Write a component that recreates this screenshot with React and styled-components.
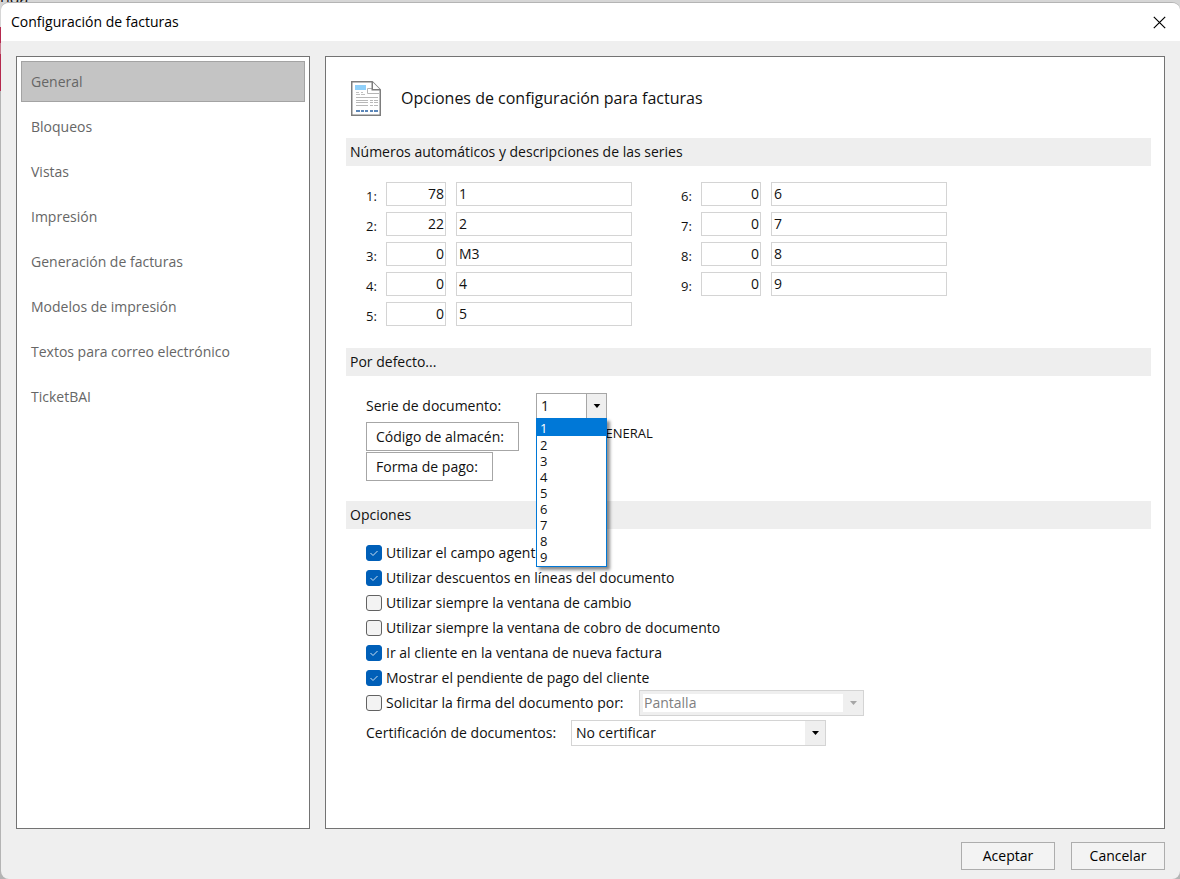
import React, { useState } from 'react';
import styled, { createGlobalStyle } from 'styled-components';

const GlobalStyle = createGlobalStyle`
  * {
    box-sizing: border-box;
  }

  body {
    margin: 0;
    background: #d6d6d6;
    font-family: 'Open Sans', 'Noto Sans', sans-serif;
    font-size: 14px;
    line-height: 20px;
    color: #111;
  }

  button,
  input,
  select {
    font: inherit;
    color: inherit;
  }
`;

const Desktop = styled.div`
  display: flex;
  flex-direction: column;
  min-height: 100vh;
  background: linear-gradient(
    #d6d6d6 27px,
    #b5294e 27px,
    #b5294e 43px,
    #c9788c 43px,
    #c9788c 54px,
    #b5294e 54px,
    #b5294e 91px,
    #b4b4b4 91px
  );
`;

const BehindStrip = styled.div`
  height: 2px;
  overflow: hidden;
  display: flex;
  align-items: flex-end;
  font-size: 16px;
  line-height: 8px;
`;

const Window = styled.div`
  flex: 1;
  display: flex;
  flex-direction: column;
  margin-left: 1px;
  background: #efefef;
  border-top: 1px solid #b4b4b4;
  border-radius: 8px;
  overflow: hidden;
`;

const TitleBar = styled.header`
  display: flex;
  align-items: center;
  justify-content: space-between;
  height: 38px;
  padding: 0 14px 0 10px;
  background: #fff;
  color: #000;

  h1 {
    margin: 0;
    font-size: 14px;
    font-weight: 400;
  }
`;

const CloseButton = styled.button`
  display: flex;
  padding: 0;
  border: 0;
  background: none;
`;

const Body = styled.div`
  flex: 1;
  display: flex;
  gap: 15px;
  padding: 15px 15px 0;
`;

const Sidebar = styled.nav`
  flex: 0 0 294px;
  display: flex;
  flex-direction: column;
  gap: 4px;
  padding: 4px;
  background: #fff;
  border: 1px solid #737373;
`;

const SideLink = styled.a`
  display: flex;
  align-items: center;
  height: 41px;
  padding: 0 9px;
  color: #666;
  text-decoration: none;
  background: ${(props) => (props.$active ? '#c4c4c4' : 'transparent')};
  border: 1px solid ${(props) => (props.$active ? '#a3a3a3' : 'transparent')};
`;

const Content = styled.main`
  flex: 1;
  min-width: 0;
  padding: 20px 13px 20px 20px;
  background: #fff;
  border: 1px solid #737373;
`;

const PageHeader = styled.div`
  display: flex;
  align-items: center;
  gap: 20px;
  height: 42px;
  padding-left: 5px;
  margin-bottom: 19px;

  h2 {
    margin: 0;
    font-size: 16px;
    font-weight: 400;
  }
`;

const SectionTitle = styled.h3`
  margin: 0;
  padding: 4px;
  background: #eee;
  font-size: 14px;
  font-weight: 400;
`;

const SeriesGrid = styled.div`
  display: grid;
  grid-template-columns: 266px 266px;
  grid-template-rows: repeat(5, 24px);
  grid-auto-flow: column;
  column-gap: 49px;
  row-gap: 6px;
  padding: 16px 20px 22px;
`;

const SeriesRow = styled.div`
  display: grid;
  grid-template-columns: 10px 60px 176px;
  gap: 10px;

  label {
    padding-top: 4px;
    font-size: 13px;
    white-space: nowrap;
  }
`;

const Field = styled.input`
  min-width: 0;
  height: 24px;
  padding: 0 1px 2px 2px;
  border: 1px solid #d4d4d4;
  background: #fff;
  text-align: ${(props) => props.$align || 'left'};
  outline: 0;
`;

const Defaults = styled.div`
  display: grid;
  grid-template-columns: 170px 1fr;
  grid-auto-rows: 30px;
  align-items: center;
  padding: 15px 20px 20px;
`;

const LinkButton = styled.button`
  justify-self: start;
  align-self: end;
  height: 29px;
  padding: 0 14px 0 9px;
  border: 1px solid #a6a6a6;
  background: #fff;
`;

const Warehouse = styled.span`
  padding: 0 0 6px 60px;
  font-size: 13px;
`;

const Combo = styled.div`
  position: relative;
  display: grid;
  width: ${(props) => props.$width}px;
  height: 26px;

  > select,
  > svg {
    grid-area: 1 / 1;
  }

  > svg {
    justify-self: end;
    width: 20px;
    height: 24px;
    margin: 1px;
    background: #efefef;
    border-left: ${(props) => (props.$open ? '1px solid #a6a6a6' : '0')};
    color: ${(props) => (props.$disabled ? '#a6a6a6' : '#000')};
    pointer-events: none;
  }
`;

const Select = styled.select`
  appearance: none;
  width: 100%;
  height: 26px;
  padding: 0 24px 0 4px;
  border: 1px solid ${(props) => (props.$open ? '#a6a6a6' : '#d4d4d4')};
  border-radius: 0;
  background: #fff;
  outline: 0;

  &:disabled {
    color: #808080;
    opacity: 1;
    box-shadow: inset 0 0 0 3px #efefef;
  }
`;

const List = styled.ul`
  position: absolute;
  top: 25px;
  left: 0;
  z-index: 1;
  width: 100%;
  margin: 0;
  padding: 0;
  list-style: none;
  background: #fff;
  border: 1px solid #0078d7;
  box-shadow: 3px 3px 3px rgba(0, 0, 0, 0.45);
`;

const ListItem = styled.li`
  height: 16px;
  padding: 0 3px;
  font-size: 13px;
  line-height: 18px;
  color: ${(props) => (props.$selected ? '#fff' : 'inherit')};
  background: ${(props) => (props.$selected ? '#0078d7' : 'transparent')};

  &:first-child {
    height: 17px;
  }

  &:last-child {
    height: 18px;
  }
`;

const Options = styled.div`
  display: flex;
  flex-direction: column;
  padding: 11px 20px;
`;

const OptionRow = styled.div`
  display: flex;
  align-items: center;
  height: 25px;
`;

const ComboRow = styled.div`
  display: grid;
  grid-template-columns: ${(props) => props.$label}px auto;
  align-items: center;
  height: ${(props) => props.$height}px;
`;

const CheckLabel = styled.label`
  display: flex;
  align-items: center;
  gap: 4px;
`;

const CheckBox = styled.span`
  display: grid;
  width: 16px;
  height: 16px;

  > * {
    grid-area: 1 / 1;
  }

  input {
    appearance: none;
    width: 16px;
    height: 16px;
    margin: 0;
    border: 1px solid #626262;
    border-radius: 3px;
    background: #f3f3f3;
  }

  input:checked {
    border-color: #005fb8;
    background: #005fb8;
  }

  svg {
    pointer-events: none;
  }
`;

const Footer = styled.footer`
  display: flex;
  justify-content: flex-end;
  gap: 16px;
  padding: 13px 15px 9px;
`;

const DialogButton = styled.button`
  width: 94px;
  height: 28px;
  padding: 0;
  border: 1px solid #adadad;
  background: #f3f3f3;
  color: #000;
`;

const menu = [
  'General',
  'Bloqueos',
  'Vistas',
  'Impresión',
  'Generación de facturas',
  'Modelos de impresión',
  'Textos para correo electrónico',
  'TicketBAI',
];

const series = [
  { id: 1, number: 78, name: '1' },
  { id: 2, number: 22, name: '2' },
  { id: 3, number: 0, name: 'M3' },
  { id: 4, number: 0, name: '4' },
  { id: 5, number: 0, name: '5' },
  { id: 6, number: 0, name: '6' },
  { id: 7, number: 0, name: '7' },
  { id: 8, number: 0, name: '8' },
  { id: 9, number: 0, name: '9' },
];

const options = [
  { label: 'Utilizar el campo agente', checked: true },
  { label: 'Utilizar descuentos en líneas del documento', checked: true },
  { label: 'Utilizar siempre la ventana de cambio', checked: false },
  { label: 'Utilizar siempre la ventana de cobro de documento', checked: false },
  { label: 'Ir al cliente en la ventana de nueva factura', checked: true },
  { label: 'Mostrar el pendiente de pago del cliente', checked: true },
];

const Arrow = () => (
  <svg viewBox="0 0 20 24" aria-hidden="true">
    <path d="M7 10h7l-3.5 4z" fill="currentColor" />
  </svg>
);

const InvoiceIcon = () => (
  <svg width="30" height="35" viewBox="0 0 30 35" aria-hidden="true">
    <path d="M.75.75h20.500l8 8v25.500H.75z" fill="#fff" stroke="#7d7d7d" strokeWidth="1.5" />
    <path d="M21 7.500h-4.500v5h11.500" fill="none" stroke="#b5b5b5" />
    <path d="M21.250.75v8h8" fill="#fff" stroke="#7d7d7d" strokeWidth="1.5" />
    <path d="M4 4h11v5H4z" fill="#8fd0fa" />
    <path d="M5 11.500h3m2 0h2M5 13.500h4m1 0h4" stroke="#c0c0c0" />
    <path d="M5 16.500h22M5 19.500h12m2 0h3m1 0h4M5 21.500h12m2 0h3m1 0h4M5 24.500h12m2 0h3m1 0h4" stroke="#b8b8b8" />
    <path d="M5 30h4m1 0h3m1 0h3m2 0h3m1 0h4" stroke="#5b86b8" strokeWidth="2" />
  </svg>
);

const Check = ({ label, defaultChecked }) => {
  const [checked, setChecked] = useState(defaultChecked);

  return (
    <CheckLabel>
      <CheckBox>
        <input type="checkbox" checked={checked} onChange={() => setChecked(!checked)} />
        {checked && (
          <svg width="16" height="16" viewBox="0 0 16 16" aria-hidden="true">
            <path d="M4.500 8l2.500 2.500 4.500-4.500" fill="none" stroke="#cfe2f3" />
          </svg>
        )}
      </CheckBox>
      {label}
    </CheckLabel>
  );
};

const App = () => {
  const [serie, setSerie] = useState(1);
  const [open, setOpen] = useState(true);

  const pickSerie = (id) => {
    setSerie(id);
    setOpen(false);
  };

  return (
    <Desktop>
      <GlobalStyle />
      <BehindStrip aria-hidden="true">nda</BehindStrip>
      <Window role="dialog" aria-labelledby="dialog-title">
        <TitleBar>
          <h1 id="dialog-title">Configuración de facturas</h1>
          <CloseButton type="button" aria-label="Cerrar">
            <svg width="13" height="13" viewBox="0 0 13 13">
              <path d="M.8.8l11.400 11.400M12.200.8L.8 12.200" stroke="#000" strokeWidth="1.200" />
            </svg>
          </CloseButton>
        </TitleBar>

        <Body>
          <Sidebar>
            {menu.map((item, i) => (
              <SideLink key={item} href="#" $active={i === 0}>{item}</SideLink>
            ))}
          </Sidebar>

          <Content>
            <PageHeader>
              <InvoiceIcon />
              <h2>Opciones de configuración para facturas</h2>
            </PageHeader>

            <SectionTitle>Números automáticos y descripciones de las series</SectionTitle>
            <SeriesGrid>
              {series.map((row) => (
                <SeriesRow key={row.id}>
                  <label htmlFor={`num-${row.id}`}>{row.id}:</label>
                  <Field id={`num-${row.id}`} $align="right" defaultValue={row.number} />
                  <Field aria-label={`Descripción ${row.id}`} defaultValue={row.name} />
                </SeriesRow>
              ))}
            </SeriesGrid>

            <SectionTitle>Por defecto...</SectionTitle>
            <Defaults>
              <label htmlFor="serie">Serie de documento:</label>
              <Combo $width={71} $open={open}>
                <Select
                  id="serie"
                  $open={open}
                  value={serie}
                  onChange={(e) => setSerie(Number(e.target.value))}
                >
                  {series.map((row) => (
                    <option key={row.id} value={row.id}>{row.id}</option>
                  ))}
                </Select>
                <Arrow />
                {open && (
                  <List role="listbox" aria-label="Serie de documento">
                    {series.map((row) => (
                      <ListItem
                        key={row.id}
                        role="option"
                        aria-selected={row.id === serie}
                        $selected={row.id === serie}
                        onClick={() => pickSerie(row.id)}
                      >
                        {row.id}
                      </ListItem>
                    ))}
                  </List>
                )}
              </Combo>
              <LinkButton type="button">Código de almacén:</LinkButton>
              <Warehouse>GENERAL</Warehouse>
              <LinkButton type="button">Forma de pago:</LinkButton>
            </Defaults>

            <SectionTitle>Opciones</SectionTitle>
            <Options>
              {options.map((option) => (
                <OptionRow key={option.label}>
                  <Check label={option.label} defaultChecked={option.checked} />
                </OptionRow>
              ))}
              <ComboRow $label={273} $height={25}>
                <Check label="Solicitar la firma del documento por:" defaultChecked={false} />
                <Combo $width={225} $disabled>
                  <Select aria-label="Solicitar la firma por" disabled>
                    <option>Pantalla</option>
                  </Select>
                  <Arrow />
                </Combo>
              </ComboRow>
              <ComboRow $label={205} $height={35}>
                <label htmlFor="cert">Certificación de documentos:</label>
                <Combo $width={255}>
                  <Select id="cert">
                    <option>No certificar</option>
                  </Select>
                  <Arrow />
                </Combo>
              </ComboRow>
            </Options>
          </Content>
        </Body>

        <Footer>
          <DialogButton type="button">Aceptar</DialogButton>
          <DialogButton type="button">Cancelar</DialogButton>
        </Footer>
      </Window>
    </Desktop>
  );
};

export default App;
